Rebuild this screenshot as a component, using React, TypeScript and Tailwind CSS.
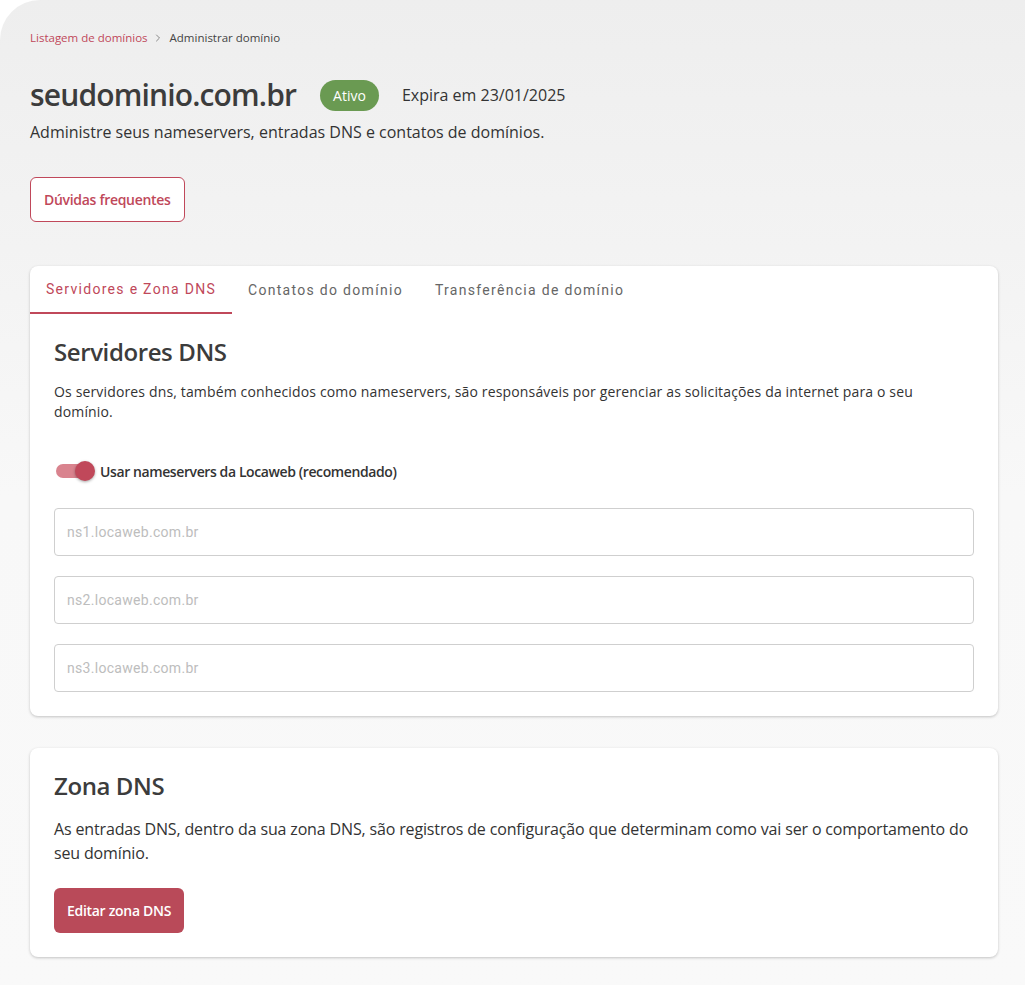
import { ChevronRight } from 'lucide-react'

const body = { fontFamily: '"Open Sans", "Noto Sans", sans-serif' }
const roboto = { fontFamily: 'Roboto, "Noto Sans", sans-serif' }

const nameservers = ['ns1.locaweb.com.br', 'ns2.locaweb.com.br', 'ns3.locaweb.com.br']

export default function App() {
  return (
    <div className="min-h-[985px] bg-white" style={body}>
      <div className="min-h-[985px] rounded-tl-[40px] bg-gradient-to-b from-[#eeeeee] via-[#f8f8f8] to-[#f9f9f9] pl-[30px] pr-[27px] pt-[29px] pb-[28px]">
        {/* Breadcrumb */}
        <nav className="flex items-center text-[11.5px] leading-[18px]">
          <span className="text-[#c0485a]">Listagem de domínios</span>
          <ChevronRight size={12} className="text-[#666] ml-[4px] mr-[6px]" strokeWidth={1.5} />
          <span className="text-[#444]">Administrar domínio</span>
        </nav>

        {/* Title row */}
        <div className="mt-[28px] flex items-center">
          <h1 className="text-[30px] leading-[40px] font-semibold text-[#3c3c3c] tracking-[-0.85px]">seudominio.com.br</h1>
          <span className="ml-[24px] rounded-full bg-[#6a9a52] px-[13px] py-[5px] text-[14px] leading-[21px] text-white">Ativo</span>
          <span className="ml-[23px] text-[16px] text-[#333]">Expira em 23/01/2025</span>
        </div>
        <p className="mt-[5px] text-[16px] leading-[24px] text-[#333]">
          Administre seus nameservers, entradas DNS e contatos de domínios.
        </p>

        <button className="mt-[33px] h-[45px] rounded-md border border-[#c0485a] bg-white px-[13px] text-[14px] font-semibold tracking-[-0.3px] text-[#c0485a]">
          Dúvidas frequentes
        </button>

        {/* Servidores card */}
        <section className="mt-[44px] rounded-lg bg-white shadow-[0_1px_3px_rgba(0,0,0,0.22)]">
          <div className="flex h-[48px] items-stretch text-[14px] tracking-[1.3px]" style={roboto}>
            <div className="flex w-[202px] items-center justify-center border-b-2 border-[#c0485a] text-[#c0485a]">
              Servidores e Zona DNS
            </div>
            <div className="flex items-center px-[16px] text-[#666]">Contatos do domínio</div>
            <div className="flex items-center px-[16px] text-[#666]">Transferência de domínio</div>
          </div>
          <div className="px-[24px] pt-[22px] pb-[24px]">
            <h2 className="text-[24px] leading-[32px] font-semibold tracking-[-0.4px] text-[#3c3c3c]">Servidores DNS</h2>
            <p className="mt-[14px] text-[14px] leading-[20px] tracking-[0.15px] text-[#333]">
              Os servidores dns, também conhecidos como nameservers, são responsáveis por gerenciar as solicitações da internet para o seu domínio.
            </p>
            <div className="mt-[39px] flex h-[20px] items-center">
              <div className="relative ml-[2px] h-[14px] w-[36px] rounded-full bg-[#d9838e]">
                <div className="absolute right-[-3px] top-[-3px] h-[20px] w-[20px] rounded-full bg-[#c0485a] shadow-[0_1px_3px_rgba(0,0,0,0.35)]" />
              </div>
              <span className="ml-[8px] text-[14px] font-semibold tracking-[-0.4px] text-[#333]">Usar nameservers da Locaweb (recomendado)</span>
            </div>
            <div className="mt-[27px] flex flex-col gap-[20px]">
              {nameservers.map((ns) => (
                <input
                  key={ns}
                  placeholder={ns}
                  className="h-[48px] w-full rounded border border-[#cfcfcf] px-[12px] text-[14px] tracking-[0.3px] placeholder:text-[#bdbdbd] outline-none"
                  style={roboto}
                />
              ))}
            </div>
          </div>
        </section>

        {/* Zona DNS card */}
        <section className="mt-[32px] rounded-lg bg-white px-[24px] pt-[22px] pb-[24px] shadow-[0_1px_3px_rgba(0,0,0,0.22)]">
          <h2 className="text-[24px] leading-[32px] font-semibold tracking-[-0.4px] text-[#3c3c3c]">Zona DNS</h2>
          <p className="mt-[15px] text-[16px] leading-[24px] tracking-[-0.15px] text-[#333]">
            As entradas DNS, dentro da sua zona DNS, são registros de configuração que determinam como vai ser o comportamento do seu domínio.
          </p>
          <button className="mt-[23px] h-[45px] rounded-md bg-[#b94a59] px-[13px] text-[14px] font-semibold tracking-[-0.3px] text-white">
            Editar zona DNS
          </button>
        </section>
      </div>
    </div>
  )
}
